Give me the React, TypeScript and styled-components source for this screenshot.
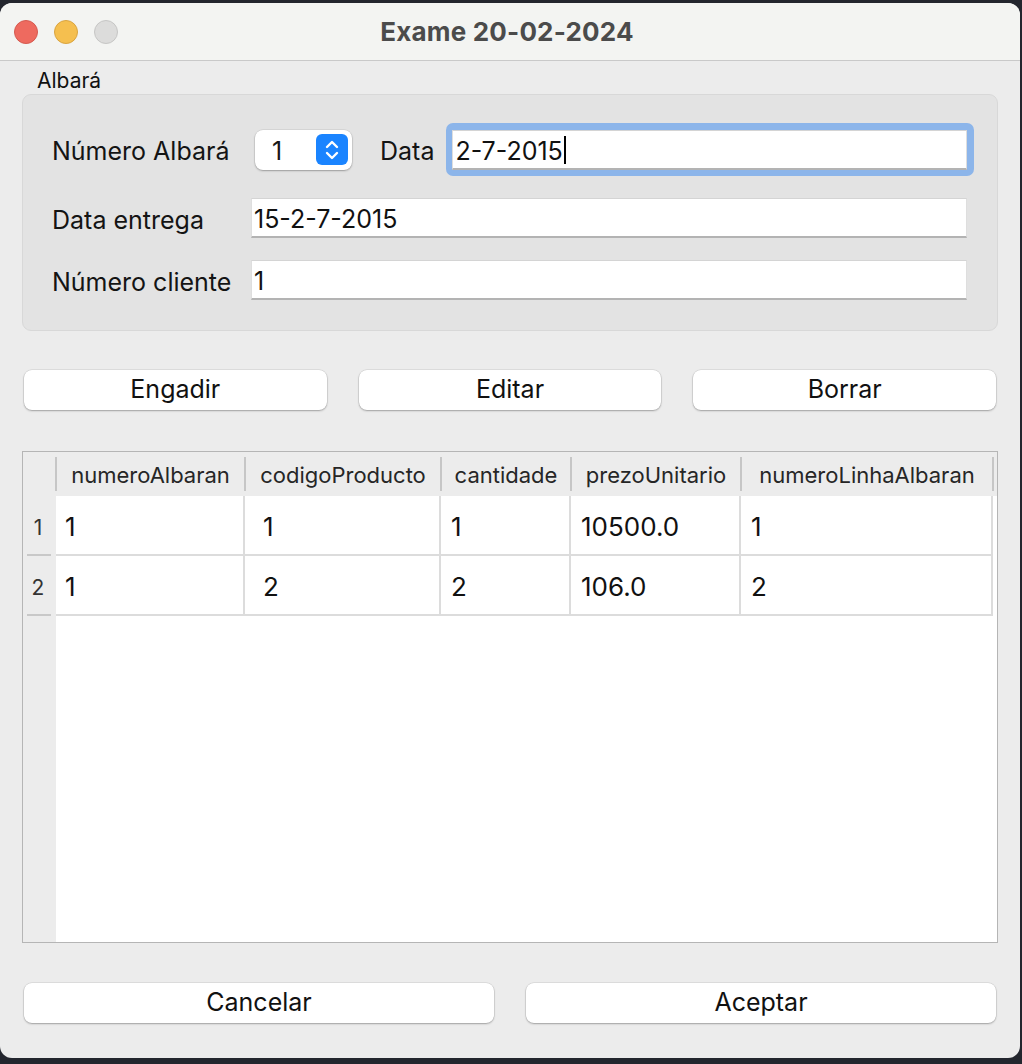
import React from "react";
import styled, { createGlobalStyle } from "styled-components";

const Global = createGlobalStyle`
  html, body { margin: 0; padding: 0; background: #23262e; }
  body { font-family: Inter, "Liberation Sans", "Noto Sans", sans-serif; color: #161616; }
  * { box-sizing: border-box; }
`;

const Window = styled.div`
  width: 1020px;
  height: 1055px;
  margin-top: 3px;
  background: #ececec;
  border-radius: 12px;
  overflow: hidden;
  display: flex;
  flex-direction: column;
`;

const TitleBar = styled.div`
  height: 58px;
  flex: none;
  background: #f3f4f2;
  border-bottom: 1px solid #c9c9c9;
  display: grid;
  grid-template-columns: 1fr auto 1fr;
  align-items: center;
`;

const Lights = styled.div`
  display: flex;
  gap: 16px;
  padding-left: 14px;
  padding-top: 1px;
`;

const Light = styled.span<{ $fill: string; $edge: string }>`
  width: 24px;
  height: 24px;
  border-radius: 50%;
  background: ${(p) => p.$fill};
  border: 1px solid ${(p) => p.$edge};
`;

const Title = styled.div`
  font-size: 26px;
  font-weight: 700;
  color: #4b4b4b;
  letter-spacing: 0.2px;
  margin-left: -6px;
`;

const Content = styled.div`
  flex: 1;
  display: flex;
  flex-direction: column;
  padding: 9px 22px 36px 22px;
`;

const GroupLabel = styled.div`
  font-size: 21px;
  line-height: 22px;
  margin-left: 15px;
  color: #111;
`;

const Group = styled.div`
  margin-top: 2px;
  height: 237px;
  background: #e3e3e3;
  border: 1px solid #d8d8d8;
  border-radius: 9px;
  padding: 28px 30px 0 29px;
  display: flex;
  flex-direction: column;
`;

const FormRow = styled.div<{ $h: number; $gap: number }>`
  display: flex;
  align-items: center;
  height: ${(p) => p.$h}px;
  margin-top: ${(p) => p.$gap}px;
`;

const Label = styled.span<{ $w?: number }>`
  font-size: 25px;
  color: #141414;
  flex: none;
  padding-top: 3px;
  width: ${(p) => (p.$w ? `${p.$w}px` : "auto")};
`;

const Spin = styled.div`
  width: 97px;
  height: 40px;
  background: #fff;
  border-radius: 8px;
  box-shadow: 0 0 0 0.5px rgba(0, 0, 0, 0.1), 0 1px 2px rgba(0, 0, 0, 0.28);
  display: flex;
  align-items: center;
  justify-content: space-between;
  padding: 0 4px 0 17px;
  font-size: 25px;
  margin-right: 28px;
`;

const SpinValue = styled.span`
  padding-top: 3px;
`;

const Stepper = styled.div`
  width: 32px;
  height: 31px;
  border-radius: 6px;
  background: #1a84ff;
  display: flex;
  align-items: center;
  justify-content: center;
`;

const FocusRing = styled.div`
  flex: 1;
  margin-left: 12px;
  margin-right: -7px;
  padding: 7px 7px 6px 6px;
  background: #8cb5ea;
  border-radius: 7px;
  display: flex;
`;

const Field = styled.div`
  flex: 1;
  height: 40px;
  background: #fff;
  border-top: 1px solid #d4d4d4;
  border-left: 1px solid #dedede;
  border-right: 1px solid #dedede;
  border-bottom: 2px solid #b3b3b3;
  display: flex;
  align-items: center;
  padding: 3px 0 0 2px;
  font-size: 25px;
  color: #111;
`;

const Caret = styled.span`
  display: inline-block;
  width: 2px;
  height: 28px;
  background: #000;
  margin: -3px 0 0 1px;
`;

const ButtonRow = styled.div<{ $cols: number; $top: number }>`
  display: grid;
  grid-template-columns: repeat(${(p) => p.$cols}, 1fr);
  gap: 32px;
  padding: 0 2px;
  margin-top: ${(p) => p.$top}px;
`;

const Button = styled.button`
  height: 40px;
  border: none;
  background: #fff;
  border-radius: 8px;
  box-shadow: 0 0 0 0.5px rgba(0, 0, 0, 0.12), 0 1px 2px rgba(0, 0, 0, 0.28);
  font-family: inherit;
  font-size: 25px;
  color: #111;
  padding: 0 0 2px 0;
`;

const Table = styled.div`
  margin-top: 41px;
  height: 492px;
  border: 1px solid #b5b5b5;
  background: #fff;
  display: grid;
  grid-template-columns: 33px 189px 196px 130px 170px 252px 1fr;
  grid-template-rows: 44px 60px 60px 1fr;
`;

const Corner = styled.div`
  background: #ececec;
`;

const HeadCell = styled.div<{ $last?: boolean }>`
  position: relative;
  background: #ececec;
  display: flex;
  align-items: center;
  justify-content: center;
  font-size: 22px;
  color: #262626;
  padding-top: 1px;
  &::before {
    content: "";
    position: absolute;
    left: -1px;
    top: 5px;
    bottom: 5px;
    width: 2px;
    background: #c6c6c6;
  }
  ${(p) =>
    p.$last &&
    `&::after {
      content: "";
      position: absolute;
      right: -1px;
      top: 5px;
      bottom: 5px;
      width: 2px;
      background: #c6c6c6;
    }`}
`;

const RowHead = styled.div`
  position: relative;
  background: #ececec;
  display: flex;
  align-items: center;
  justify-content: center;
  font-size: 21px;
  color: #333;
  padding: 2px 3px 0 0;
  &::after {
    content: "";
    position: absolute;
    left: 4px;
    right: 5px;
    bottom: 0;
    height: 2px;
    background: #c8c8c8;
  }
`;

const Cell = styled.div<{ $pad: number }>`
  border-right: 2px solid #dcdcdc;
  border-bottom: 2px solid #dcdcdc;
  display: flex;
  align-items: center;
  padding-left: ${(p) => p.$pad}px;
  padding-top: 2px;
  font-size: 26px;
  color: #111;
`;

const Blank = styled.div``;

const RowHeadFill = styled.div`
  background: #ececec;
`;

const BodyFill = styled.div`
  grid-column: 2 / -1;
  background: #fff;
`;

const columns = ["numeroAlbaran", "codigoProducto", "cantidade", "prezoUnitario", "numeroLinhaAlbaran"];
const pads = [9, 18, 10, 10, 10];
const rows = [
  ["1", "1", "1", "10500.0", "1"],
  ["1", "2", "2", "106.0", "2"],
];

function Chevrons() {
  return (
    <svg width="18" height="24" viewBox="0 0 18 24" fill="none" stroke="#fff" strokeWidth="2.4" strokeLinecap="round" strokeLinejoin="round">
      <path d="M4 9 L9 4 L14 9" />
      <path d="M4 15 L9 20 L14 15" />
    </svg>
  );
}

export default function App() {
  return (
    <>
      <Global />
      <Window>
        <TitleBar>
          <Lights>
            <Light $fill="#ee6a5f" $edge="#d55a50" />
            <Light $fill="#f5bf4f" $edge="#d9a441" />
            <Light $fill="#dcdcdb" $edge="#c6c6c5" />
          </Lights>
          <Title>Exame 20-02-2024</Title>
          <div />
        </TitleBar>
        <Content>
          <GroupLabel>Albará</GroupLabel>
          <Group>
            <FormRow $h={53} $gap={0}>
              <Label $w={203}>Número Albará</Label>
              <Spin>
                <SpinValue>1</SpinValue>
                <Stepper>
                  <Chevrons />
                </Stepper>
              </Spin>
              <Label>Data</Label>
              <FocusRing>
                <Field>
                  2-7-2015
                  <Caret />
                </Field>
              </FocusRing>
            </FormRow>
            <FormRow $h={40} $gap={22}>
              <Label $w={199}>Data entrega</Label>
              <Field>15-2-7-2015</Field>
            </FormRow>
            <FormRow $h={40} $gap={22}>
              <Label $w={199}>Número cliente</Label>
              <Field>1</Field>
            </FormRow>
          </Group>
          <ButtonRow $cols={3} $top={39}>
            <Button>Engadir</Button>
            <Button>Editar</Button>
            <Button>Borrar</Button>
          </ButtonRow>
          <Table>
            <Corner />
            {columns.map((c, i) => (
              <HeadCell key={c} $last={i === columns.length - 1}>
                {c}
              </HeadCell>
            ))}
            <Corner />
            {rows.map((r, ri) => (
              <React.Fragment key={ri}>
                <RowHead>{ri + 1}</RowHead>
                {r.map((v, ci) => (
                  <Cell key={ci} $pad={pads[ci]}>
                    {v}
                  </Cell>
                ))}
                <Blank />
              </React.Fragment>
            ))}
            <RowHeadFill />
            <BodyFill />
          </Table>
          <ButtonRow $cols={2} $top={40}>
            <Button>Cancelar</Button>
            <Button>Aceptar</Button>
          </ButtonRow>
        </Content>
      </Window>
    </>
  );
}
